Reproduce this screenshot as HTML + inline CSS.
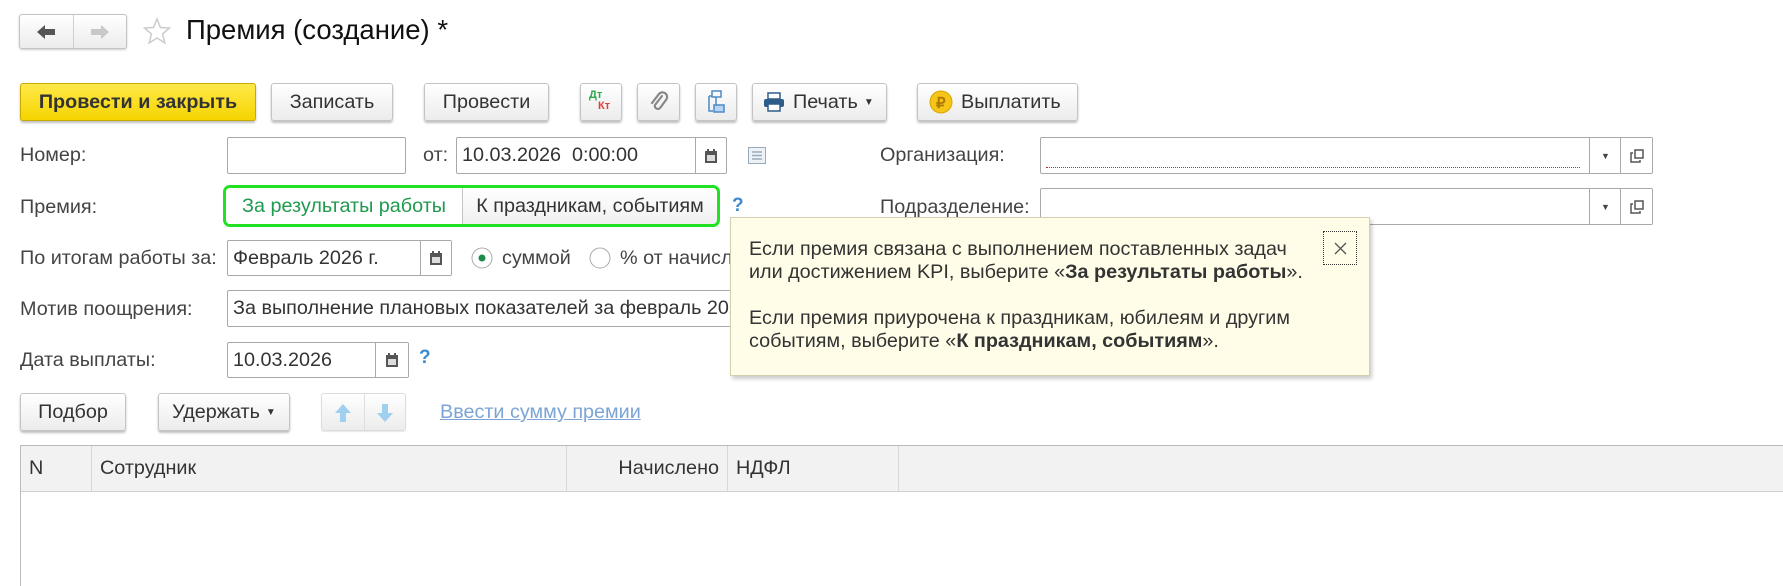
<!DOCTYPE html>
<html><head><meta charset="utf-8"><style>
*{box-sizing:border-box;margin:0;padding:0}
body{width:1783px;height:586px;background:#fff;position:relative;overflow:hidden;font-family:"Liberation Sans",Arial,sans-serif;font-size:19.8px;color:#333}
.a{position:absolute}
.btn{position:absolute;border:1px solid #c4c4c4;border-radius:3px;background:linear-gradient(#fff,#ececec);box-shadow:0 2px 2px rgba(0,0,0,.25);display:flex;align-items:center;justify-content:center;color:#333;white-space:nowrap}
.fld{position:absolute;border:1px solid #a9a9a9;border-radius:2px;background:#fff;display:flex;align-items:center;padding-left:5px;white-space:nowrap;overflow:hidden;color:#333}
.lbl{position:absolute;white-space:nowrap;color:#444}
.cal{position:absolute;top:0;bottom:0;right:0;border-left:1px solid #a9a9a9;display:flex;align-items:center;justify-content:center;background:#fff}
.q{position:absolute;color:#3d8ad0;font-weight:bold;font-size:19px}
.th{position:absolute;top:0;height:45px;border-right:1px solid #d8d8d8;display:flex;align-items:center;padding:0 8px;color:#333}
</style></head><body>

<!-- nav -->
<div class="btn" style="left:19px;top:14px;width:108px;height:35px;box-shadow:0 1px 2px rgba(0,0,0,.2)">
 <div style="position:absolute;left:53px;top:0;bottom:0;border-left:1px solid #d0d0d0"></div>
 <svg class="a" style="left:16px;top:9px" width="20" height="16"><path d="M1 8 L9 1 L9 5 L19 5 L19 11 L9 11 L9 15 Z" fill="#555"/></svg>
 <svg class="a" style="left:70px;top:9px" width="20" height="16"><path d="M19 8 L11 1 L11 5 L1 5 L1 11 L11 11 L11 15 Z" fill="#c8c8c8"/></svg>
</div>
<svg class="a" style="left:143px;top:17px" width="28" height="28"><path d="M14 2 L17.5 10.5 L26.5 11 L19.5 17 L21.8 26 L14 21 L6.2 26 L8.5 17 L1.5 11 L10.5 10.5 Z" fill="none" stroke="#ccc" stroke-width="1.5"/></svg>
<div class="a" style="left:186px;top:14px;font-size:27.5px;color:#111;white-space:nowrap">Премия (создание) *</div>

<!-- toolbar -->
<div class="btn" style="left:20px;top:83px;width:236px;height:38px;background:linear-gradient(#ffe94a,#f5d400);border-color:#c9ab00;font-weight:bold;color:#333">Провести и закрыть</div>
<div class="btn" style="left:271px;top:83px;width:122px;height:38px">Записать</div>
<div class="btn" style="left:424px;top:83px;width:125px;height:38px">Провести</div>
<div class="btn" style="left:580px;top:83px;width:42px;height:38px"><span style="position:absolute;left:8px;top:5px;font-size:11px;font-weight:bold;color:#2aa84a">Дт</span><span style="position:absolute;left:17px;top:16px;font-size:11px;font-weight:bold;color:#e0403a">Кт</span></div>
<div class="btn" style="left:637px;top:83px;width:43px;height:38px"><svg width="20" height="22"><path d="M13 5 L6 14 A3 3 0 0 0 11 17 L17 9 A4.5 4.5 0 0 0 10 3 L3 12" fill="none" stroke="#888" stroke-width="2.2" stroke-linecap="round"/></svg></div>
<div class="btn" style="left:695px;top:83px;width:42px;height:38px"><svg width="22" height="24"><rect x="7" y="1" width="9" height="6" fill="none" stroke="#4a8ac8" stroke-width="1.5"/><rect x="9" y="15" width="10" height="7" fill="#b8d4ee" stroke="#4a8ac8" stroke-width="1.5"/><path d="M4 6 V21 H8 M4 6 H7 M11 7 V15" fill="none" stroke="#4a8ac8" stroke-width="1.5"/></svg></div>
<div class="btn" style="left:752px;top:83px;width:135px;height:38px;justify-content:flex-start;padding-left:10px"><svg width="22" height="20"><rect x="5" y="1" width="12" height="6" fill="#fff" stroke="#2f5d8a" stroke-width="1.5"/><rect x="1" y="7" width="20" height="8" rx="2" fill="#2f5d8a"/><rect x="5" y="12" width="12" height="7" fill="#fff" stroke="#2f5d8a" stroke-width="1.5"/></svg><span style="margin-left:8px">Печать</span><span style="margin-left:6px;font-size:10px">▼</span></div>
<div class="btn" style="left:917px;top:83px;width:161px;height:38px;justify-content:flex-start;padding-left:11px"><svg width="24" height="24"><circle cx="12" cy="12" r="11" fill="#f5c518" stroke="#d9a400"/><text x="7" y="18" font-size="15" font-weight="bold" fill="#b07800" font-family="Liberation Sans">₽</text></svg><span style="margin-left:8px">Выплатить</span></div>

<!-- row Номер -->
<div class="lbl" style="left:20px;top:144px">Номер:</div>
<div class="fld" style="left:227px;top:137px;width:179px;height:37px"></div>
<div class="lbl" style="left:423px;top:144px">от:</div>
<div class="fld" style="left:456px;top:137px;width:271px;height:37px">10.03.2026&nbsp; 0:00:00<div class="cal" style="width:31px"><svg width="12" height="14"><rect x="0" y="2" width="12" height="12" fill="#555"/><rect x="2" y="6" width="8" height="6" fill="#ddd"/><rect x="2" y="0" width="2" height="3" fill="#555"/><rect x="8" y="0" width="2" height="3" fill="#555"/></svg></div></div>
<svg class="a" style="left:747px;top:146px" width="20" height="20"><rect x="1.5" y="1.5" width="17" height="16" fill="#eef2f7" stroke="#9aaabd"/><path d="M5 6H15M5 9.5H15M5 13H15" stroke="#9aaabd" stroke-width="1.4"/></svg>
<div class="lbl" style="left:880px;top:144px">Организация:</div>
<div class="fld" style="left:1040px;top:137px;width:613px;height:37px">
 <div class="a" style="left:5px;right:72px;bottom:5px;border-bottom:1px dotted #e02020"></div>
 <div class="cal" style="right:31px;width:32px"><span style="font-size:9px;color:#444">▼</span></div>
 <div class="cal" style="width:32px"><svg width="16" height="16"><rect x="6" y="2" width="8" height="8" fill="none" stroke="#555" stroke-width="1.5"/><path d="M4 5H2V14H11V12" fill="none" stroke="#555" stroke-width="1.5"/></svg></div>
</div>

<!-- row Премия -->
<div class="lbl" style="left:20px;top:196px">Премия:</div>
<div class="a" style="left:223px;top:185px;width:497px;height:42px;border:3px solid #22e022;border-radius:7px;background:linear-gradient(#fff,#f0f0f0);overflow:hidden">
 <div class="a" style="left:0;top:0;width:236px;height:36px;display:flex;align-items:center;justify-content:center;color:#1f9a4e;background:#fff">За результаты работы</div>
 <div class="a" style="left:236px;top:0;right:0;height:36px;border-left:1px solid #c4c4c4;display:flex;align-items:center;justify-content:center;color:#333">К праздникам, событиям</div>
</div>
<div class="q" style="left:732px;top:195px">?</div>
<div class="lbl" style="left:880px;top:196px">Подразделение:</div>
<div class="fld" style="left:1040px;top:188px;width:613px;height:37px">
 <div class="cal" style="right:31px;width:32px"><span style="font-size:9px;color:#444">▼</span></div>
 <div class="cal" style="width:32px"><svg width="16" height="16"><rect x="6" y="2" width="8" height="8" fill="none" stroke="#555" stroke-width="1.5"/><path d="M4 5H2V14H11V12" fill="none" stroke="#555" stroke-width="1.5"/></svg></div>
</div>

<!-- По итогам -->
<div class="lbl" style="left:20px;top:247px">По итогам работы за:</div>
<div class="fld" style="left:227px;top:240px;width:225px;height:36px">Февраль 2026 г.<div class="cal" style="width:31px"><svg width="12" height="14"><rect x="0" y="2" width="12" height="12" fill="#555"/><rect x="2" y="6" width="8" height="6" fill="#ddd"/><rect x="2" y="0" width="2" height="3" fill="#555"/><rect x="8" y="0" width="2" height="3" fill="#555"/></svg></div></div>
<svg class="a" style="left:471px;top:247px" width="22" height="22"><circle cx="11" cy="11" r="10" fill="#fff" stroke="#aaa"/><circle cx="11" cy="11" r="3.5" fill="#1f8a4a"/></svg>
<div class="lbl" style="left:502px;top:247px">суммой</div>
<svg class="a" style="left:589px;top:247px" width="22" height="22"><circle cx="11" cy="11" r="10" fill="#fff" stroke="#aaa"/></svg>
<div class="lbl" style="left:620px;top:247px">% от начисл</div>

<!-- Мотив -->
<div class="lbl" style="left:20px;top:298px">Мотив поощрения:</div>
<div class="fld" style="left:227px;top:290px;width:560px;height:37px">За выполнение плановых показателей за февраль 2026</div>

<!-- Дата -->
<div class="lbl" style="left:20px;top:349px">Дата выплаты:</div>
<div class="fld" style="left:227px;top:342px;width:182px;height:36px">10.03.2026<div class="cal" style="width:33px"><svg width="12" height="14"><rect x="0" y="2" width="12" height="12" fill="#555"/><rect x="2" y="6" width="8" height="6" fill="#ddd"/><rect x="2" y="0" width="2" height="3" fill="#555"/><rect x="8" y="0" width="2" height="3" fill="#555"/></svg></div></div>
<div class="q" style="left:419px;top:347px">?</div>

<!-- bottom buttons -->
<div class="btn" style="left:20px;top:393px;width:106px;height:38px">Подбор</div>
<div class="btn" style="left:158px;top:393px;width:132px;height:38px">Удержать<span style="margin-left:6px;font-size:10px">▼</span></div>
<div class="btn" style="left:321px;top:393px;width:85px;height:38px;box-shadow:0 1px 1px rgba(0,0,0,.1);border-color:#ddd">
 <div class="a" style="left:42px;top:0;bottom:0;border-left:1px solid #ddd"></div>
 <svg class="a" style="left:12px;top:9px" width="18" height="20"><path d="M9 1 L17 10 H12 V19 H6 V10 H1 Z" fill="#9fd0f0"/></svg>
 <svg class="a" style="left:54px;top:9px" width="18" height="20"><path d="M9 19 L17 10 H12 V1 H6 V10 H1 Z" fill="#9fd0f0"/></svg>
</div>
<div class="a" style="left:440px;top:401px;color:#7ba4d4;text-decoration:underline;white-space:nowrap">Ввести сумму премии</div>

<!-- table -->
<div class="a" style="left:20px;top:445px;width:1763px;height:141px;border-left:1px solid #bbb;border-top:1px solid #bbb">
 <div class="a" style="left:0;top:0;right:0;height:46px;background:#f2f2f2;border-bottom:1px solid #d0d0d0"></div>
 <div class="th" style="left:0;width:71px">N</div>
 <div class="th" style="left:71px;width:475px">Сотрудник</div>
 <div class="th" style="left:546px;width:161px;justify-content:flex-end">Начислено</div>
 <div class="th" style="left:707px;width:171px">НДФЛ</div>
</div>

<!-- popup -->
<div class="a" style="left:730px;top:217px;width:640px;height:159px;background:#fffde8;border:1px solid #d4cfae;box-shadow:2px 3px 4px rgba(0,0,0,.2)">
 <div class="a" style="left:592px;top:13px;width:34px;height:34px;border:1px dotted #333;display:flex;align-items:center;justify-content:center"><svg width="13" height="13"><path d="M1 1L12 12M12 1L1 12" stroke="#555" stroke-width="1.3"/></svg></div>
 <div class="a" style="left:18px;top:20px;line-height:23px;color:#333;white-space:nowrap;font-size:19.8px">Если премия связана с выполнением поставленных задач<br>или достижением KPI, выберите «<b>За результаты работы</b>».<br><br>Если премия приурочена к праздникам, юбилеям и другим<br>событиям, выберите «<b>К праздникам, событиям</b>».</div>
</div>
</body></html>
